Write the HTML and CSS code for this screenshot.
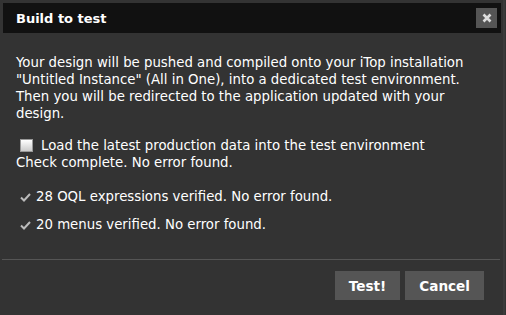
FILE: index.html
```html
<!DOCTYPE html>
<html lang="en">
<head>
    <meta charset="UTF-8">
    <title>Build to test</title>
    <link rel="stylesheet" href="styles.css">
</head>
<body>
    <div class="dialog">
        <div class="titlebar">
            <span class="title">Build to test</span>
            <button class="close" title="Close">
                <svg width="10" height="10" viewBox="0 0 10 10"><path d="M1.5 1.5 L8.5 8.5 M8.5 1.5 L1.5 8.5" stroke="#ddd" stroke-width="2.6"/></svg>
            </button>
        </div>
        <div class="content">
            <p class="intro">Your design will be pushed and compiled onto your iTop installation "Untitled Instance" (All in One), into a dedicated test environment. Then you will be redirected to the application updated with your design.</p>
            <label class="option"><span class="box"></span>Load the latest production data into the test environment</label>
            <div class="status">Check complete. No error found.</div>
            <div class="check"><svg class="tick" width="11" height="9" viewBox="0 0 11 9"><path d="M1 4.5 L4 7.5 L10 1" fill="none" stroke="#bbb" stroke-width="2"/></svg>28 OQL expressions verified. No error found.</div>
            <div class="check"><svg class="tick" width="11" height="9" viewBox="0 0 11 9"><path d="M1 4.5 L4 7.5 L10 1" fill="none" stroke="#bbb" stroke-width="2"/></svg>20 menus verified. No error found.</div>
        </div>
        <div class="buttons">
            <button class="btn">Test!</button>
            <button class="btn">Cancel</button>
        </div>
    </div>
</body>
</html>
```
FILE: styles.css
```css
body {
    margin: 0;
    background-color: #333333;
    font-family: "DejaVu Sans", Verdana, sans-serif;
    font-size: 13px;
    color: #ffffff;
}
.dialog {
    width: 503px;
    height: 315px;
    border-right: 2px solid #3b3b3b;
    display: flex;
    flex-direction: column;
}
.titlebar {
    margin: 3px 2px 0 3px;
    height: 30px;
    background-color: #111111;
    display: flex;
    align-items: center;
    justify-content: space-between;
    padding: 0 4px 0 13px;
}
.title {
    font-weight: bold;
}
.close {
    width: 21px;
    height: 20px;
    border: none;
    padding: 0;
    background-color: #555555;
    display: flex;
    align-items: center;
    justify-content: center;
}
.content {
    padding: 21px 16px 0 16px;
    font-size: 13.3px;
    line-height: 17px;
    flex-grow: 1;
}
.intro {
    margin: 0 0 15px 0;
}
.option {
    display: flex;
    align-items: center;
}
.box {
    width: 11px;
    height: 11px;
    margin: 0 8px 0 4px;
    border: 1px solid #999;
    background: linear-gradient(#ffffff, #cccccc);
}
.status {
    margin-bottom: 17px;
}
.check {
    margin-bottom: 11px;
    display: flex;
    align-items: center;
}
.tick {
    margin: 1px 5px 0 4px;
}
.buttons {
    margin: 0 3px 0 2px;
    border-top: 1px solid #555555;
    display: flex;
    justify-content: flex-end;
    gap: 5px;
    padding: 11px 16px 15px 0;
}
.btn {
    background-color: #555555;
    color: #ffffff;
    border: none;
    font-family: "DejaVu Sans", Verdana, sans-serif;
    font-size: 13.6px;
    font-weight: bold;
    height: 29px;
    padding: 0 14px;
}
```
